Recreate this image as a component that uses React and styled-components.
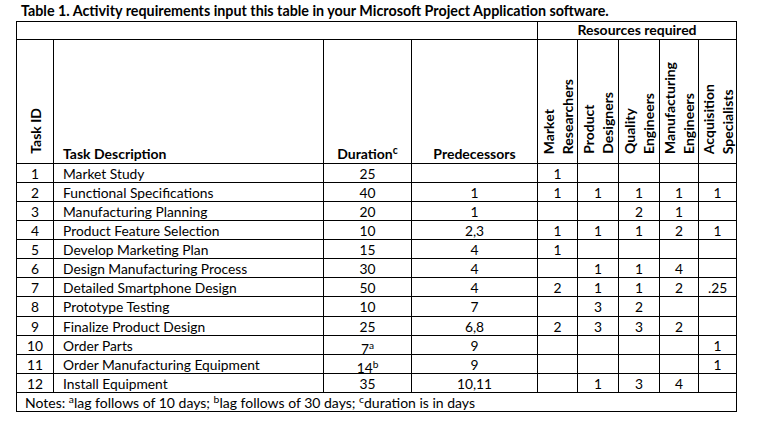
import styled, { createGlobalStyle } from "styled-components";

const GlobalStyle = createGlobalStyle`
  body {
    margin: 0;
    background: #ffffff;
    font-family: Lato, "Open Sans", sans-serif;
    color: #000000;
  }
`;

const resources = [
  ["Market", "Researchers"],
  ["Product", "Designers"],
  ["Quality", "Engineers"],
  ["Manufacturing", "Engineers"],
  ["Acquisition", "Specialists"],
];

const tasks = [
  [1, "Market Study", "25", "", ["1", "", "", "", ""]],
  [2, "Functional Specifications", "40", "1", ["1", "1", "1", "1", "1"]],
  [3, "Manufacturing Planning", "20", "1", ["", "", "2", "1", ""]],
  [4, "Product Feature Selection", "10", "2,3", ["1", "1", "1", "2", "1"]],
  [5, "Develop Marketing Plan", "15", "4", ["1", "", "", "", ""]],
  [6, "Design Manufacturing Process", "30", "4", ["", "1", "1", "4", ""]],
  [7, "Detailed Smartphone Design", "50", "4", ["2", "1", "1", "2", ".25"]],
  [8, "Prototype Testing", "10", "7", ["", "3", "2", "", ""]],
  [9, "Finalize Product Design", "25", "6,8", ["2", "3", "3", "2", ""]],
  [10, "Order Parts", "7", "9", ["", "", "", "", "1"], "a"],
  [11, "Order Manufacturing Equipment", "14", "9", ["", "", "", "", "1"], "b"],
  [12, "Install Equipment", "35", "10,11", ["", "1", "3", "4", ""]],
];

export default function App() {
  return (
    <>
      <GlobalStyle />
      <Page>
        <Title>Table 1. Activity requirements input this table in your Microsoft Project Application software.</Title>
        <Table>
          <colgroup>
            <col style={{ width: 37 }} />
            <col style={{ width: 270 }} />
            <col style={{ width: 88 }} />
            <col style={{ width: 126 }} />
            <col style={{ width: 40 }} />
            <col style={{ width: 41 }} />
            <col style={{ width: 41 }} />
            <col style={{ width: 39 }} />
            <col style={{ width: 38 }} />
          </colgroup>
          <thead>
            <TopRow>
              <HeadCell colSpan={4} />
              <HeadCell colSpan={5} $align="center">Resources required</HeadCell>
            </TopRow>
            <LabelRow>
              <VerticalCell>
                <Vertical>Task ID</Vertical>
              </VerticalCell>
              <HeadCell $align="left">Task Description</HeadCell>
              <HeadCell $align="center">
                Duration<Sup>c</Sup>
              </HeadCell>
              <HeadCell $align="center">Predecessors</HeadCell>
              {resources.map(([a, b]) => (
                <VerticalCell key={a}>
                  <Vertical>
                    {a}
                    <br />
                    {b}
                  </Vertical>
                </VerticalCell>
              ))}
            </LabelRow>
          </thead>
          <tbody>
            {tasks.map(([id, name, dur, pred, res, note]) => (
              <Row key={id} $tall={id === 8}>
                <Cell $align="center">{id}</Cell>
                <Cell $align="left">{name}</Cell>
                <Cell $align="center">
                  {note ? (
                    <Low>
                      {dur}
                      <Sup>{note}</Sup>
                    </Low>
                  ) : (
                    dur
                  )}
                </Cell>
                <Cell $align="center">{pred}</Cell>
                {res.map((v, i) => (
                  <Cell key={i} $align="center">{v}</Cell>
                ))}
              </Row>
            ))}
            <Row>
              <NoteCell colSpan={9}>
                Notes: <Sup>a</Sup>lag follows of 10 days; <Sup>b</Sup>lag follows of 30 days; <Sup>c</Sup>duration is in days
              </NoteCell>
            </Row>
          </tbody>
        </Table>
      </Page>
    </>
  );
}

const Page = styled.div`
  padding: 2px 0 0 16px;
`;

const Title = styled.div`
  margin: 0 0 1px 5px;
  font-weight: bold;
  font-size: 14.3px;
  line-height: 18px;
  white-space: nowrap;
`;

const Table = styled.table`
  border-collapse: collapse;
  table-layout: fixed;
  width: 721px;
  font-size: 13.8px;

  td,
  th {
    border: 1px solid #000000;
    padding: 0;
  }
`;

const TopRow = styled.tr`
  height: 18px;
`;

const LabelRow = styled.tr`
  height: 124px;
`;

const HeadCell = styled.th`
  font-weight: bold;
  font-size: 14px;
  text-align: ${(p) => p.$align || "center"};
  vertical-align: bottom;
  padding: 0 0 1px ${(p) => (p.$align === "left" ? "9px" : "0")} !important;
  line-height: 16px;
  white-space: nowrap;
`;

const VerticalCell = styled.th`
  vertical-align: bottom;
  padding: 0 0 9px 0 !important;
  overflow: hidden;
`;

const Vertical = styled.div`
  writing-mode: vertical-rl;
  transform: rotate(180deg);
  text-align: left;
  font-weight: bold;
  font-size: 14px;
  line-height: 19px;
  white-space: nowrap;
  margin: 0 auto;
`;

const Row = styled.tr`
  height: ${(p) => (p.$tall ? "20px" : "19px")};
`;

const Cell = styled.td`
  text-align: ${(p) => p.$align};
  padding: 0 0 0 ${(p) => (p.$align === "left" ? "9px" : "0")} !important;
  line-height: 17px;
  white-space: nowrap;
`;

const Low = styled.span`
  position: relative;
  top: 3px;
`;

const Sup = styled.sup`
  font-size: 0.74em;
  vertical-align: 0.45em;
  line-height: 0;
`;

const NoteCell = styled.td`
  padding: 0 0 0 8px !important;
  line-height: 17px;
  white-space: nowrap;
  font-size: 14px;
`;
